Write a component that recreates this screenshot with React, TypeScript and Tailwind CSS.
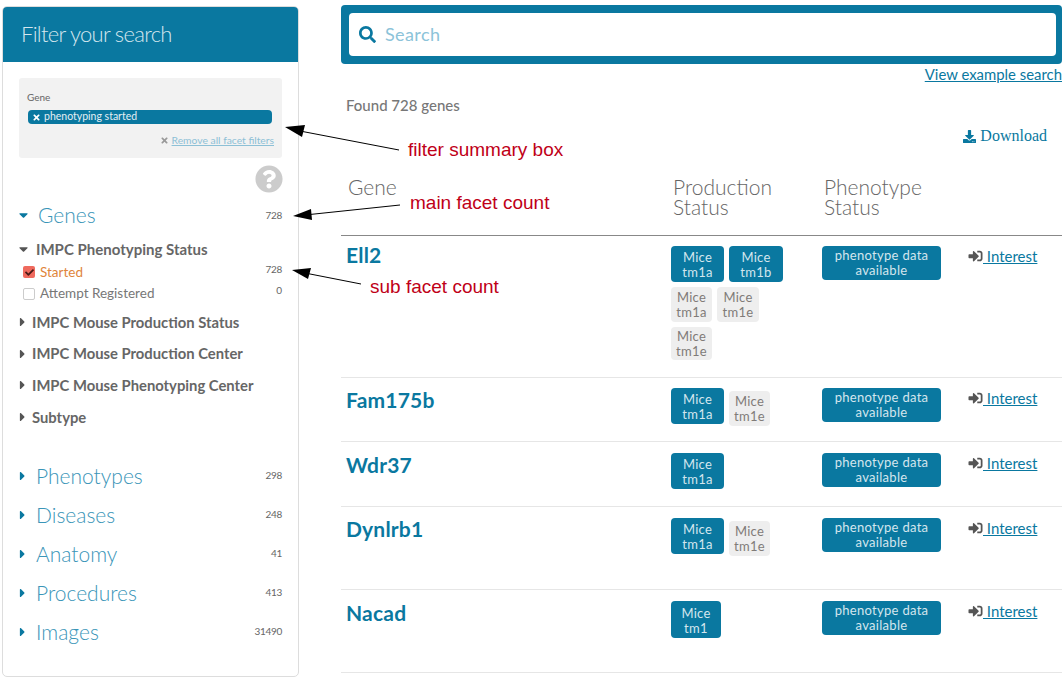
import { FaCheck, FaDownload, FaQuestionCircle, FaSearch, FaSignInAlt, FaTimes, FaCaretDown, FaCaretRight } from "react-icons/fa";

const font = "font-['Lato','Noto_Sans',sans-serif]";

function Pill({ label, on = true, className = "" }: { label: [string, string]; on?: boolean; className?: string }) {
  return (
    <div
      className={`flex flex-col items-center justify-center rounded-[4px] text-[13px] leading-[15px] tracking-[0.3px] ${
        on ? "bg-[#0a78a0] pt-[2px] text-[#d4e6ee]" : "bg-[#eeeeee] text-[#807b78]"
      } ${className}`}
    >
      <span>{label[0]}</span>
      <span>{label[1]}</span>
    </div>
  );
}

function PhenotypePill() {
  return (
    <div className="flex h-[34px] w-[119px] flex-col items-center justify-center rounded-[4px] bg-[#0a78a0] text-[13px] leading-[15px] tracking-[0.3px] text-[#d4e6ee]">
      <span>phenotype data</span>
      <span>available</span>
    </div>
  );
}

function Interest() {
  return (
    <div className="ml-[27px] flex items-center text-[15px] leading-[20px] text-[#0a78a0]">
      <FaSignInAlt className="h-[14px] w-[15px] text-[#555555]" />
      <span className="underline">&nbsp;Interest</span>
    </div>
  );
}

function GeneRow({ name, height, pt, cellPt, children }: { name: string; height: string; pt: string; cellPt: string; children: React.ReactNode }) {
  return (
    <div className={`flex border-b border-[#e6e6e6] ${height}`}>
      <div className={`w-[330px] pl-[5px] text-[21px] leading-[24px] font-bold tracking-[0.2px] text-[#0a78a0] ${pt}`}>{name}</div>
      <div className={`w-[151px] ${cellPt}`}>{children}</div>
      <div className={cellPt}>
        <PhenotypePill />
      </div>
      <div className={cellPt}>
        <Interest />
      </div>
    </div>
  );
}

function SubFacet({ label }: { label: string }) {
  return (
    <div className="flex h-[31.7px] items-center text-[14.8px] font-bold text-[#666666]">
      <FaCaretRight className="mr-[6px] h-[14px] w-[7px] text-[#555555]" />
      {label}
    </div>
  );
}

function MainFacet({ label, count }: { label: string; count: string }) {
  return (
    <div className="flex h-[39px] items-center">
      <FaCaretRight className="mr-[10px] h-[14px] w-[7px] text-[#0a78a0]" />
      <span className="flex-1 text-[21px] font-light text-[#3a95b8]">{label}</span>
      <span className="text-[10px] tracking-[-0.3px] text-[#666666]">{count}</span>
    </div>
  );
}

export default function App() {
  return (
    <div className={`relative flex h-[686px] w-[1062px] overflow-hidden bg-white ${font}`}>
      <aside className="mt-[6px] ml-[2px] flex h-[671px] w-[297px] flex-col rounded-[5px] border border-[#dddddd] bg-white">
        <div className="flex h-[55px] items-center rounded-t-[4px] bg-[#0a78a0] pb-[2px] pl-[18px] text-[22px] font-light tracking-[-0.7px] text-[#d4e6ee]">
          Filter your search
        </div>
        <div className="px-[16px] pt-[16px]">
          <div className="h-[80px] rounded-[3px] bg-[#f2f2f2] px-[8px] pt-[12px]">
            <div className="text-[10px] leading-[14px] text-[#666666]">Gene</div>
            <div className="mt-[6px] mr-[2px] ml-[1px] flex h-[14px] items-center rounded-[4px] bg-[#0a78a0] pl-[4px] text-[10.5px] text-[#e4eff4]">
              <FaTimes className="mr-[3px] h-[9px] w-[9px] text-white" />
              phenotyping started
            </div>
            <div className="mt-[9px] flex items-center justify-end text-[10.3px] text-[#8dc0d6]">
              <FaTimes className="mr-[3px] h-[9px] w-[9px] text-[#999999]" />
              <span className="underline">Remove all facet filters</span>
            </div>
          </div>
          <div className="mt-[7px] -mr-[1px] flex justify-end">
            <FaQuestionCircle className="h-[28px] w-[28px] text-[#cccccc]" />
          </div>
          <div className="mt-[7px] flex h-[30px] items-center">
            <FaCaretDown className="mr-[10px] h-[14px] w-[9px] text-[#0a78a0]" />
            <span className="flex-1 text-[21px] font-light text-[#3a95b8]">Genes</span>
            <span className="text-[10px] tracking-[-0.3px] text-[#666666]">728</span>
          </div>
          <div className="mt-[9px] flex h-[20px] items-center text-[15px] font-bold text-[#666666]">
            <FaCaretDown className="mr-[8px] h-[14px] w-[9px] text-[#555555]" />
            IMPC Phenotyping Status
          </div>
          <div className="mt-[2px] flex h-[22px] items-center pl-[4px] text-[13.5px] text-[#e0853a]">
            <span className="mr-[5px] flex h-[12px] w-[12px] items-center justify-center rounded-[2px] bg-[#ef6a5e]">
              <FaCheck className="h-[9px] w-[9px] text-[#4a1a16]" />
            </span>
            <span className="flex-1">Started</span>
            <span className="-mt-[6px] text-[10px] tracking-[-0.3px] text-[#666666]">728</span>
          </div>
          <div className="flex h-[21px] items-center pl-[4px] text-[13.5px] text-[#777777]">
            <span className="mr-[5px] h-[12px] w-[12px] rounded-[2px] border border-[#cccccc] bg-white" />
            <span className="flex-1">Attempt Registered</span>
            <span className="-mt-[6px] text-[10px] text-[#666666]">0</span>
          </div>
          <div className="mt-[2px]">
            <SubFacet label="IMPC Mouse Production Status" />
            <SubFacet label="IMPC Mouse Production Center" />
            <SubFacet label="IMPC Mouse Phenotyping Center" />
            <SubFacet label="Subtype" />
          </div>
          <div className="mt-[23.4px]">
            <MainFacet label="Phenotypes" count="298" />
            <MainFacet label="Diseases" count="248" />
            <MainFacet label="Anatomy" count="41" />
            <MainFacet label="Procedures" count="413" />
            <MainFacet label="Images" count="31490" />
          </div>
        </div>
      </aside>

      <main className="mt-[5px] ml-[42px] w-[721px]">
        <div className="h-[59px] rounded-[4px] bg-[#0a78a0] p-[8px] pr-[6px]">
          <div className="flex h-[43px] items-center rounded-[4px] bg-white pl-[10px]">
            <FaSearch className="mr-[9px] h-[17px] w-[17px] text-[#0a78a0]" />
            <span className="text-[18px] tracking-[0.4px] text-[#8cc3d9]">Search</span>
          </div>
        </div>
        <div className="text-right text-[14.9px] leading-[21px] text-[#0a78a0] underline">View example search</div>
        <div className="mt-[10px] pl-[5px] text-[15px] leading-[20px] font-medium text-[#777777]">Found 728 genes</div>
        <div className="mt-[11px] flex items-center justify-end pr-[15px] text-[16px] leading-[20px] text-[#0a78a0]">
          <FaDownload className="mr-[4px] h-[13px] w-[13px]" />
          <span className="font-['Liberation_Serif',serif]">Download</span>
        </div>
        <div className="mt-[30px] flex h-[60px] border-b border-[#888888] text-[21px] leading-[20px] font-light text-[#666666]">
          <div className="w-[332px] pl-[7px] pt-[1px]">Gene</div>
          <div className="w-[151px] pt-[1px]">
            Production
            <br />
            Status
          </div>
          <div className="pt-[1px]">
            Phenotype
            <br />
            Status
          </div>
        </div>
        <GeneRow name="Ell2" height="h-[142px]" pt="pt-[7px]" cellPt="pt-[10px]">
          <div className="flex flex-wrap gap-x-[5px]">
            <Pill label={["Mice", "tm1a"]} className="h-[36px] w-[53px]" />
            <Pill label={["Mice", "tm1b"]} className="h-[36px] w-[54px]" />
          </div>
          <div className="mt-[5px] flex gap-x-[5px]">
            <Pill label={["Mice", "tm1a"]} on={false} className="h-[35px] w-[41px]" />
            <Pill label={["Mice", "tm1e"]} on={false} className="h-[35px] w-[42px]" />
          </div>
          <Pill label={["Mice", "tm1e"]} on={false} className="mt-[5px] h-[33px] w-[41px]" />
        </GeneRow>
        <GeneRow name="Fam175b" height="h-[64px]" pt="pt-[10px]" cellPt="pt-[10px]">
          <div className="flex items-start gap-x-[5px]">
            <Pill label={["Mice", "tm1a"]} className="h-[36px] w-[53px]" />
            <Pill label={["Mice", "tm1e"]} on={false} className="mt-[3px] h-[35px] w-[41px]" />
          </div>
        </GeneRow>
        <GeneRow name="Wdr37" height="h-[65px]" pt="pt-[11px]" cellPt="pt-[11px]">
          <Pill label={["Mice", "tm1a"]} className="h-[36px] w-[53px]" />
        </GeneRow>
        <GeneRow name="Dynlrb1" height="h-[83px]" pt="pt-[10px]" cellPt="pt-[11px]">
          <div className="flex items-start gap-x-[5px]">
            <Pill label={["Mice", "tm1a"]} className="h-[36px] w-[53px]" />
            <Pill label={["Mice", "tm1e"]} on={false} className="mt-[3px] h-[35px] w-[41px]" />
          </div>
        </GeneRow>
        <GeneRow name="Nacad" height="h-[83px]" pt="pt-[11px]" cellPt="pt-[11px]">
          <Pill label={["Mice", "tm1"]} className="h-[37px] w-[50px]" />
        </GeneRow>
      </main>

      <svg className="pointer-events-none absolute top-0 left-0" width="1062" height="686">
        <line x1="300" y1="131" x2="399" y2="150" stroke="#000" strokeWidth="1" />
        <polygon points="285,127 305,125 302,137" fill="#000" />
        <line x1="305" y1="215" x2="400" y2="205" stroke="#000" strokeWidth="1" />
        <polygon points="293,216 311,209 312,220" fill="#000" />
        <line x1="305" y1="273" x2="361" y2="284" stroke="#000" strokeWidth="1" />
        <polygon points="292,270 311,268 308,279" fill="#000" />
      </svg>
      <span className="absolute top-[140px] left-[408px] font-['Liberation_Sans',sans-serif] text-[19px] leading-[20px] text-[#c00018]">filter summary box</span>
      <span className="absolute top-[193px] left-[410px] font-['Liberation_Sans',sans-serif] text-[19px] leading-[20px] text-[#c00018]">main facet count</span>
      <span className="absolute top-[277px] left-[370px] font-['Liberation_Sans',sans-serif] text-[19px] leading-[20px] text-[#c00018]">sub facet count</span>
    </div>
  );
}
